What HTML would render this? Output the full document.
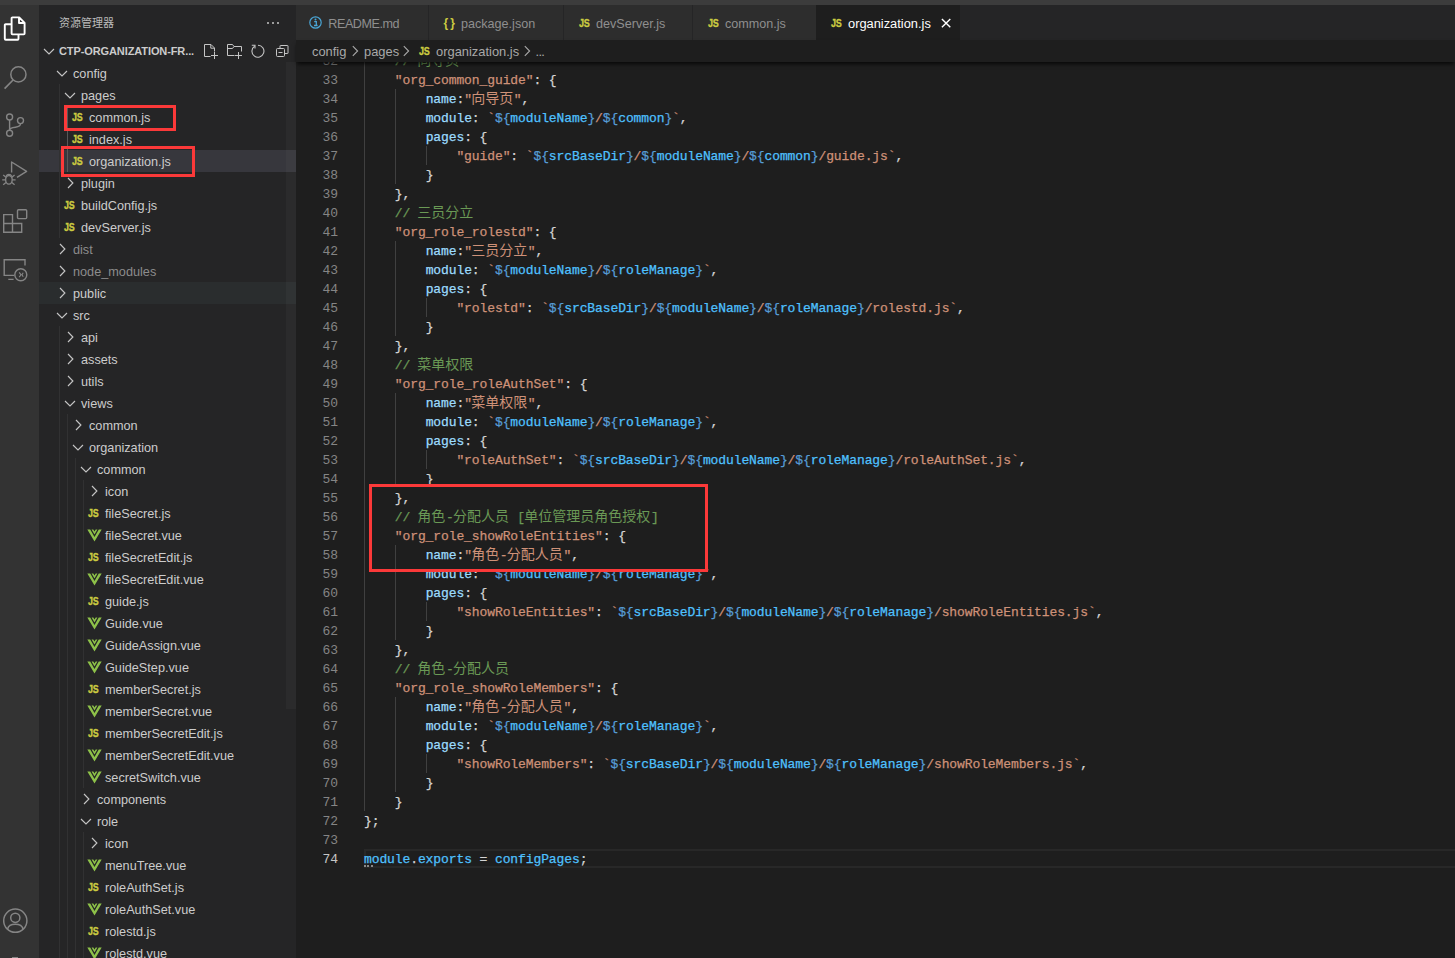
<!DOCTYPE html>
<html lang="zh-CN">
<head>
<meta charset="utf-8">
<title>organization.js - ctp-organization-front - Visual Studio Code</title>
<style>
*{box-sizing:border-box;margin:0;padding:0}
html,body{width:1455px;height:958px;overflow:hidden;background:#1e1e1e}
body{position:relative;font-family:"Liberation Sans","Noto Sans CJK SC",sans-serif;font-size:13px;color:#cccccc;-webkit-font-smoothing:antialiased}
#titlestrip{position:absolute;left:0;top:0;width:1455px;height:5px;background:#3c3c3c;z-index:20}
/* activity bar */
#act{position:absolute;left:0;top:5px;width:39px;height:953px;background:#333333;overflow:hidden}
#act svg{position:absolute}
/* sidebar */
#side{position:absolute;left:39px;top:5px;width:257px;height:953px;background:#252526;overflow:hidden}
#sidewrap{position:absolute;left:-39px;top:-5px;width:296px;height:958px}
#sidetitle{position:absolute;left:59px;top:15px;font-size:11px;line-height:16px;color:#bbbbbb;white-space:nowrap}
#sidedots{position:absolute;left:266.6px;top:21.7px;width:15px;height:3px}
#sidedots i{position:absolute;top:0;width:2.6px;height:2.6px;background:#c5c5c5;border-radius:1px}
#sechead{position:absolute;left:59px;top:43px;font-size:11px;line-height:16px;font-weight:bold;color:#cccccc;white-space:nowrap;letter-spacing:-0.1px}
.row{position:absolute;left:39px;width:257px;height:22px}
.row.sel{background:#37373d}
.row.hov{background:#2a2d2e}
.row>*{position:absolute}
.nm{top:1px;line-height:22px;font-size:12.7px;color:#cccccc;white-space:nowrap;margin-left:-39px}
.nm.dim{color:#8c8c8c}
.tw{top:3px;margin-left:-41px}
.js{top:0;line-height:22px;font-size:10.5px;font-weight:bold;color:#cbcb41;margin-left:-39px;letter-spacing:-0.3px;transform:scaleX(0.85);transform-origin:0 50%;-webkit-text-stroke:0.35px #cbcb41}
.vi{top:5px;margin-left:-39px}
.tg{position:absolute;width:1px;background:#313132}
.tg.on{background:#585858}
#sbar{position:absolute;left:286px;top:62px;width:10px;height:647px;background:rgba(121,121,121,0.085)}
.rbox{position:absolute;border:3px solid #fb3939}
/* tabs */
#tabs{position:absolute;left:296px;top:5px;width:1159px;height:35px;background:#252526}
.tab{position:absolute;top:0;height:35px;background:#2d2d2d;color:#8f8f8f;font-size:12.6px;line-height:36px;white-space:nowrap}
.tab.on{background:#1e1e1e;color:#ffffff;font-size:12.85px}
.tab>*{position:absolute}
.tab .tl{top:1px}
.tab .tjs{top:0;font-size:10.5px;font-weight:bold;color:#cbcb41;letter-spacing:-0.3px;transform:scaleX(0.86);transform-origin:0 50%;-webkit-text-stroke:0.3px #cbcb41}
/* breadcrumbs */
#crumbs{position:absolute;left:296px;top:40px;width:1159px;height:22px;background:#1e1e1e;z-index:10;box-shadow:0 3px 4px -1px rgba(0,0,0,0.75)}
#crumbs>*{position:absolute;top:0;line-height:23.5px;font-size:12.9px;color:#a9a9a9;white-space:nowrap}
#crumbs svg{top:3px}
#crumbs .tjs{font-size:10.5px;font-weight:bold;color:#cbcb41;letter-spacing:-0.3px;transform:scaleX(0.86);transform-origin:0 50%;-webkit-text-stroke:0.3px #cbcb41}
/* editor */
#ed{position:absolute;left:296px;top:62px;width:1159px;height:896px;background:#1e1e1e;overflow:hidden}
#edwrap{position:absolute;left:-296px;top:-62px;width:1455px;height:958px}
.ln{position:absolute;left:296px;width:42px;height:19px;line-height:21px;text-align:right;font-family:"Liberation Mono","Noto Sans CJK SC",monospace;font-size:13px;letter-spacing:-0.1px;color:#858585}
.ln.act{color:#c6c6c6}
.cl{position:absolute;left:364px;height:19px;line-height:21px;white-space:pre;font-family:"Liberation Mono","Noto Sans CJK SC",monospace;font-size:13px;letter-spacing:-0.1px;color:#d4d4d4;z-index:1;-webkit-text-stroke:0.25px}
.cl.hi,.ln.hi,.ig.hi{z-index:3}
.cj{font-size:14px;letter-spacing:0;line-height:19px;vertical-align:baseline;-webkit-text-stroke:0;position:relative;left:-0.7px}
.ig{position:absolute;width:1px;height:19px;background:#404040;z-index:1}
.c{color:#6a9955}.s{color:#ce9178}.v{color:#9cdcfe}.k{color:#569cd6}.p{color:#d4d4d4}.m{color:#4fc1ff}
#curline{position:absolute;left:364px;top:849px;width:1091px;height:19px;border:2px solid #282828;border-right:0}
#codebox{position:absolute;left:369px;top:484px;width:339px;height:88px;border:3px solid #fb3939;background:#1e1e1e;z-index:2}
#hint{position:absolute;left:364px;top:865px;width:10px;height:2px;z-index:4}
#hint i{position:absolute;top:0;width:2px;height:1.6px;background:#8a8a8a}
</style>
</head>
<body>
<div id="titlestrip"></div>

<div id="act">
  <!-- explorer (active) -->
  <svg style="left:3px;top:11px" width="24" height="26" viewBox="0 0 24 26"><path d="M9.4 1.4 H16.2 L21.6 6.8 V17.6 Q21.6 18.4 20.8 18.4 H9.4 Q8.6 18.4 8.6 17.6 V2.2 Q8.6 1.4 9.4 1.4 Z M16 1.6 V7 H21.4" fill="none" stroke="#ffffff" stroke-width="1.9" stroke-linejoin="round"/><path d="M8.6 8.3 H2.7 Q1.8 8.3 1.8 9.2 V22.8 Q1.8 23.7 2.7 23.7 H14.6 Q15.5 23.7 15.5 22.8 V18.6" fill="none" stroke="#ffffff" stroke-width="1.9" stroke-linejoin="round"/></svg>
  <!-- search -->
  <svg style="left:3px;top:60px" width="26" height="26" viewBox="0 0 26 26"><circle cx="15.4" cy="9.4" r="7.6" fill="none" stroke="#858585" stroke-width="1.5"/><path d="M10.1 15 L1.6 23.6" fill="none" stroke="#858585" stroke-width="1.6"/></svg>
  <!-- source control -->
  <svg style="left:4px;top:107px" width="22" height="26" viewBox="0 0 22 26"><circle cx="5.6" cy="5" r="3" fill="none" stroke="#858585" stroke-width="1.4"/><circle cx="5.6" cy="21.3" r="3" fill="none" stroke="#858585" stroke-width="1.4"/><circle cx="16.5" cy="8.6" r="3" fill="none" stroke="#858585" stroke-width="1.4"/><path d="M5.6 8 V18.3 M16.5 11.6 C16.5 14.6 14 15 11.5 15.2 C8.5 15.4 5.6 15.8 5.6 18.3" fill="none" stroke="#858585" stroke-width="1.4"/></svg>
  <!-- run and debug -->
  <svg style="left:1px;top:155px" width="28" height="28" viewBox="0 0 28 28"><path d="M10.6 12.4 V2 L25.6 11.4 L16 17.4" fill="none" stroke="#858585" stroke-width="1.4" stroke-linejoin="round"/><ellipse cx="7.9" cy="19.8" rx="3.3" ry="4.3" fill="none" stroke="#858585" stroke-width="1.4"/><path d="M5.2 16 C6.2 13.9 9.6 13.9 10.6 16 M1.2 19.8 H4.6 M11.2 19.8 H14.6 M2.2 15 L5 17.2 M13.6 15 L10.8 17.2 M2.2 24.8 L5 22.6 M13.6 24.8 L10.8 22.6" fill="none" stroke="#858585" stroke-width="1.3"/></svg>
  <!-- extensions -->
  <svg style="left:2px;top:202px" width="27" height="27" viewBox="0 0 27 27"><path d="M1.7 7.6 H10.5 V16.5 H19.7 V25.3 H1.7 Z M1.7 16.5 H10.5 V25.3" fill="none" stroke="#858585" stroke-width="1.4"/><rect x="15.5" y="2.8" width="9.2" height="8.8" rx="1" fill="none" stroke="#858585" stroke-width="1.4"/></svg>
  <!-- remote explorer -->
  <svg style="left:2px;top:251px" width="28" height="28" viewBox="0 0 28 28"><path d="M23 9.6 V3.7 H2.2 V19.4 H12.2 M6.3 23.4 H11.6" fill="none" stroke="#858585" stroke-width="1.4"/><circle cx="18.8" cy="18.8" r="6" fill="none" stroke="#858585" stroke-width="1.4"/><path d="M17.2 16.4 L19 18.8 L17.2 21.2 M21.2 16.8 L20 18.8 L21.2 20.8" fill="none" stroke="#858585" stroke-width="1.1"/></svg>
  <!-- account -->
  <svg style="left:1.8px;top:902.4px" width="27" height="27" viewBox="0 0 27 27"><circle cx="13.3" cy="13.7" r="11.6" fill="none" stroke="#858585" stroke-width="1.5"/><circle cx="13.3" cy="10.8" r="4.6" fill="none" stroke="#858585" stroke-width="1.5"/><path d="M5.6 22 C7 15.6 19.6 15.6 21 22" fill="none" stroke="#858585" stroke-width="1.5"/></svg>
  <!-- gear top sliver -->
  <svg style="left:11px;top:951px" width="8" height="3" viewBox="0 0 8 3"><rect x="1" y="1" width="6" height="2" fill="#858585"/></svg>
</div>

<div id="side"><div id="sidewrap">
  <div id="sidetitle">资源管理器</div>
  <div id="sidedots"><i style="left:0"></i><i style="left:5px"></i><i style="left:10px"></i></div>
  <svg style="position:absolute;left:41px;top:43px" width="16" height="16" viewBox="0 0 16 16"><path d="M3 6 L8 10.9 L13 6" fill="none" stroke="#c5c5c5" stroke-width="1.15"/></svg>
  <div id="sechead">CTP-ORGANIZATION-FR...</div>
  <!-- new file -->
  <svg style="position:absolute;left:203px;top:43px" width="16" height="17" viewBox="0 0 16 17"><path d="M7.5 13.5 H1.5 V1.5 H8 L11.5 5 V8.5 M7.8 1.7 V5.2 H11.3" fill="none" stroke="#c5c5c5" stroke-width="1"/><path d="M11.5 9 V16 M8 12.5 H15" fill="none" stroke="#c5c5c5" stroke-width="1"/></svg>
  <!-- new folder -->
  <svg style="position:absolute;left:226px;top:43px" width="17" height="17" viewBox="0 0 17 17"><path d="M8.5 12.5 H1.5 V1.5 H6.5 L8 3.5 H15.5 V8.5 M1.5 5.5 H6.5 L8 3.5" fill="none" stroke="#c5c5c5" stroke-width="1"/><path d="M12.5 9 V16 M9 12.5 H16" fill="none" stroke="#c5c5c5" stroke-width="1"/></svg>
  <!-- refresh -->
  <svg style="position:absolute;left:250px;top:43px" width="16" height="16" viewBox="0 0 16 16"><path d="M4.6 3.2 A6 6 0 1 0 8 2.2" fill="none" stroke="#c5c5c5" stroke-width="1.1"/><path d="M1.8 2.2 H5 V5.6" fill="none" stroke="#c5c5c5" stroke-width="1.1"/></svg>
  <!-- collapse all -->
  <svg style="position:absolute;left:275px;top:43px" width="15" height="15" viewBox="0 0 15 15"><path d="M5 5.5 V3 Q5 2.5 5.5 2.5 H12.5 Q13 2.5 13 3 V10 Q13 10.5 12.5 10.5 H9.5" fill="none" stroke="#c5c5c5" stroke-width="1"/><rect x="1.5" y="5.5" width="8" height="8" rx="1" fill="none" stroke="#c5c5c5" stroke-width="1"/><path d="M3.5 9.5 H7.5" stroke="#c5c5c5" stroke-width="1"/></svg>
<div class="row" style="top:62px"><svg class="tw" style="left:56px" width="16" height="16" viewBox="0 0 16 16"><path d="M3 6 L8 10.9 L13 6" fill="none" stroke="#c5c5c5" stroke-width="1.15"/></svg><span class="nm" style="left:73px">config</span></div>
<div class="row" style="top:84px"><svg class="tw" style="left:64px" width="16" height="16" viewBox="0 0 16 16"><path d="M3 6 L8 10.9 L13 6" fill="none" stroke="#c5c5c5" stroke-width="1.15"/></svg><span class="nm" style="left:81px">pages</span></div>
<div class="row" style="top:106px"><b class="js" style="left:72.0px">JS</b><span class="nm" style="left:89px">common.js</span></div>
<div class="row" style="top:128px"><b class="js" style="left:72.0px">JS</b><span class="nm" style="left:89px">index.js</span></div>
<div class="row sel" style="top:150px"><b class="js" style="left:72.0px">JS</b><span class="nm" style="left:89px">organization.js</span></div>
<div class="row" style="top:172px"><svg class="tw" style="left:64px" width="16" height="16" viewBox="0 0 16 16"><path d="M6 3 L10.9 8 L6 13" fill="none" stroke="#c5c5c5" stroke-width="1.15"/></svg><span class="nm" style="left:81px">plugin</span></div>
<div class="row" style="top:194px"><b class="js" style="left:64.0px">JS</b><span class="nm" style="left:81px">buildConfig.js</span></div>
<div class="row" style="top:216px"><b class="js" style="left:64.0px">JS</b><span class="nm" style="left:81px">devServer.js</span></div>
<div class="row" style="top:238px"><svg class="tw" style="left:56px" width="16" height="16" viewBox="0 0 16 16"><path d="M6 3 L10.9 8 L6 13" fill="none" stroke="#c5c5c5" stroke-width="1.15"/></svg><span class="nm dim" style="left:73px">dist</span></div>
<div class="row" style="top:260px"><svg class="tw" style="left:56px" width="16" height="16" viewBox="0 0 16 16"><path d="M6 3 L10.9 8 L6 13" fill="none" stroke="#c5c5c5" stroke-width="1.15"/></svg><span class="nm dim" style="left:73px">node_modules</span></div>
<div class="row hov" style="top:282px"><svg class="tw" style="left:56px" width="16" height="16" viewBox="0 0 16 16"><path d="M6 3 L10.9 8 L6 13" fill="none" stroke="#c5c5c5" stroke-width="1.15"/></svg><span class="nm" style="left:73px">public</span></div>
<div class="row" style="top:304px"><svg class="tw" style="left:56px" width="16" height="16" viewBox="0 0 16 16"><path d="M3 6 L8 10.9 L13 6" fill="none" stroke="#c5c5c5" stroke-width="1.15"/></svg><span class="nm" style="left:73px">src</span></div>
<div class="row" style="top:326px"><svg class="tw" style="left:64px" width="16" height="16" viewBox="0 0 16 16"><path d="M6 3 L10.9 8 L6 13" fill="none" stroke="#c5c5c5" stroke-width="1.15"/></svg><span class="nm" style="left:81px">api</span></div>
<div class="row" style="top:348px"><svg class="tw" style="left:64px" width="16" height="16" viewBox="0 0 16 16"><path d="M6 3 L10.9 8 L6 13" fill="none" stroke="#c5c5c5" stroke-width="1.15"/></svg><span class="nm" style="left:81px">assets</span></div>
<div class="row" style="top:370px"><svg class="tw" style="left:64px" width="16" height="16" viewBox="0 0 16 16"><path d="M6 3 L10.9 8 L6 13" fill="none" stroke="#c5c5c5" stroke-width="1.15"/></svg><span class="nm" style="left:81px">utils</span></div>
<div class="row" style="top:392px"><svg class="tw" style="left:64px" width="16" height="16" viewBox="0 0 16 16"><path d="M3 6 L8 10.9 L13 6" fill="none" stroke="#c5c5c5" stroke-width="1.15"/></svg><span class="nm" style="left:81px">views</span></div>
<div class="row" style="top:414px"><svg class="tw" style="left:72px" width="16" height="16" viewBox="0 0 16 16"><path d="M6 3 L10.9 8 L6 13" fill="none" stroke="#c5c5c5" stroke-width="1.15"/></svg><span class="nm" style="left:89px">common</span></div>
<div class="row" style="top:436px"><svg class="tw" style="left:72px" width="16" height="16" viewBox="0 0 16 16"><path d="M3 6 L8 10.9 L13 6" fill="none" stroke="#c5c5c5" stroke-width="1.15"/></svg><span class="nm" style="left:89px">organization</span></div>
<div class="row" style="top:458px"><svg class="tw" style="left:80px" width="16" height="16" viewBox="0 0 16 16"><path d="M3 6 L8 10.9 L13 6" fill="none" stroke="#c5c5c5" stroke-width="1.15"/></svg><span class="nm" style="left:97px">common</span></div>
<div class="row" style="top:480px"><svg class="tw" style="left:88px" width="16" height="16" viewBox="0 0 16 16"><path d="M6 3 L10.9 8 L6 13" fill="none" stroke="#c5c5c5" stroke-width="1.15"/></svg><span class="nm" style="left:105px">icon</span></div>
<div class="row" style="top:502px"><b class="js" style="left:88.0px">JS</b><span class="nm" style="left:105px">fileSecret.js</span></div>
<div class="row" style="top:524px"><svg class="vi" style="left:87.0px" width="15" height="13" viewBox="0 0 15 13"><path d="M0.3 0.4 H3.2 L7.5 8 L11.8 0.4 H14.7 L7.5 12.6 Z" fill="#8dc149"/><path d="M4.6 0.4 H6.3 L7.5 2.6 L8.7 0.4 H10.4 L7.5 5.6 Z" fill="#8dc149"/></svg><span class="nm" style="left:105px">fileSecret.vue</span></div>
<div class="row" style="top:546px"><b class="js" style="left:88.0px">JS</b><span class="nm" style="left:105px">fileSecretEdit.js</span></div>
<div class="row" style="top:568px"><svg class="vi" style="left:87.0px" width="15" height="13" viewBox="0 0 15 13"><path d="M0.3 0.4 H3.2 L7.5 8 L11.8 0.4 H14.7 L7.5 12.6 Z" fill="#8dc149"/><path d="M4.6 0.4 H6.3 L7.5 2.6 L8.7 0.4 H10.4 L7.5 5.6 Z" fill="#8dc149"/></svg><span class="nm" style="left:105px">fileSecretEdit.vue</span></div>
<div class="row" style="top:590px"><b class="js" style="left:88.0px">JS</b><span class="nm" style="left:105px">guide.js</span></div>
<div class="row" style="top:612px"><svg class="vi" style="left:87.0px" width="15" height="13" viewBox="0 0 15 13"><path d="M0.3 0.4 H3.2 L7.5 8 L11.8 0.4 H14.7 L7.5 12.6 Z" fill="#8dc149"/><path d="M4.6 0.4 H6.3 L7.5 2.6 L8.7 0.4 H10.4 L7.5 5.6 Z" fill="#8dc149"/></svg><span class="nm" style="left:105px">Guide.vue</span></div>
<div class="row" style="top:634px"><svg class="vi" style="left:87.0px" width="15" height="13" viewBox="0 0 15 13"><path d="M0.3 0.4 H3.2 L7.5 8 L11.8 0.4 H14.7 L7.5 12.6 Z" fill="#8dc149"/><path d="M4.6 0.4 H6.3 L7.5 2.6 L8.7 0.4 H10.4 L7.5 5.6 Z" fill="#8dc149"/></svg><span class="nm" style="left:105px">GuideAssign.vue</span></div>
<div class="row" style="top:656px"><svg class="vi" style="left:87.0px" width="15" height="13" viewBox="0 0 15 13"><path d="M0.3 0.4 H3.2 L7.5 8 L11.8 0.4 H14.7 L7.5 12.6 Z" fill="#8dc149"/><path d="M4.6 0.4 H6.3 L7.5 2.6 L8.7 0.4 H10.4 L7.5 5.6 Z" fill="#8dc149"/></svg><span class="nm" style="left:105px">GuideStep.vue</span></div>
<div class="row" style="top:678px"><b class="js" style="left:88.0px">JS</b><span class="nm" style="left:105px">memberSecret.js</span></div>
<div class="row" style="top:700px"><svg class="vi" style="left:87.0px" width="15" height="13" viewBox="0 0 15 13"><path d="M0.3 0.4 H3.2 L7.5 8 L11.8 0.4 H14.7 L7.5 12.6 Z" fill="#8dc149"/><path d="M4.6 0.4 H6.3 L7.5 2.6 L8.7 0.4 H10.4 L7.5 5.6 Z" fill="#8dc149"/></svg><span class="nm" style="left:105px">memberSecret.vue</span></div>
<div class="row" style="top:722px"><b class="js" style="left:88.0px">JS</b><span class="nm" style="left:105px">memberSecretEdit.js</span></div>
<div class="row" style="top:744px"><svg class="vi" style="left:87.0px" width="15" height="13" viewBox="0 0 15 13"><path d="M0.3 0.4 H3.2 L7.5 8 L11.8 0.4 H14.7 L7.5 12.6 Z" fill="#8dc149"/><path d="M4.6 0.4 H6.3 L7.5 2.6 L8.7 0.4 H10.4 L7.5 5.6 Z" fill="#8dc149"/></svg><span class="nm" style="left:105px">memberSecretEdit.vue</span></div>
<div class="row" style="top:766px"><svg class="vi" style="left:87.0px" width="15" height="13" viewBox="0 0 15 13"><path d="M0.3 0.4 H3.2 L7.5 8 L11.8 0.4 H14.7 L7.5 12.6 Z" fill="#8dc149"/><path d="M4.6 0.4 H6.3 L7.5 2.6 L8.7 0.4 H10.4 L7.5 5.6 Z" fill="#8dc149"/></svg><span class="nm" style="left:105px">secretSwitch.vue</span></div>
<div class="row" style="top:788px"><svg class="tw" style="left:80px" width="16" height="16" viewBox="0 0 16 16"><path d="M6 3 L10.9 8 L6 13" fill="none" stroke="#c5c5c5" stroke-width="1.15"/></svg><span class="nm" style="left:97px">components</span></div>
<div class="row" style="top:810px"><svg class="tw" style="left:80px" width="16" height="16" viewBox="0 0 16 16"><path d="M3 6 L8 10.9 L13 6" fill="none" stroke="#c5c5c5" stroke-width="1.15"/></svg><span class="nm" style="left:97px">role</span></div>
<div class="row" style="top:832px"><svg class="tw" style="left:88px" width="16" height="16" viewBox="0 0 16 16"><path d="M6 3 L10.9 8 L6 13" fill="none" stroke="#c5c5c5" stroke-width="1.15"/></svg><span class="nm" style="left:105px">icon</span></div>
<div class="row" style="top:854px"><svg class="vi" style="left:87.0px" width="15" height="13" viewBox="0 0 15 13"><path d="M0.3 0.4 H3.2 L7.5 8 L11.8 0.4 H14.7 L7.5 12.6 Z" fill="#8dc149"/><path d="M4.6 0.4 H6.3 L7.5 2.6 L8.7 0.4 H10.4 L7.5 5.6 Z" fill="#8dc149"/></svg><span class="nm" style="left:105px">menuTree.vue</span></div>
<div class="row" style="top:876px"><b class="js" style="left:88.0px">JS</b><span class="nm" style="left:105px">roleAuthSet.js</span></div>
<div class="row" style="top:898px"><svg class="vi" style="left:87.0px" width="15" height="13" viewBox="0 0 15 13"><path d="M0.3 0.4 H3.2 L7.5 8 L11.8 0.4 H14.7 L7.5 12.6 Z" fill="#8dc149"/><path d="M4.6 0.4 H6.3 L7.5 2.6 L8.7 0.4 H10.4 L7.5 5.6 Z" fill="#8dc149"/></svg><span class="nm" style="left:105px">roleAuthSet.vue</span></div>
<div class="row" style="top:920px"><b class="js" style="left:88.0px">JS</b><span class="nm" style="left:105px">rolestd.js</span></div>
<div class="row" style="top:942px"><svg class="vi" style="left:87.0px" width="15" height="13" viewBox="0 0 15 13"><path d="M0.3 0.4 H3.2 L7.5 8 L11.8 0.4 H14.7 L7.5 12.6 Z" fill="#8dc149"/><path d="M4.6 0.4 H6.3 L7.5 2.6 L8.7 0.4 H10.4 L7.5 5.6 Z" fill="#8dc149"/></svg><span class="nm" style="left:105px">rolestd.vue</span></div>
<i class="tg" style="left:59px;top:84px;height:154px"></i>
<i class="tg on" style="left:67px;top:106px;height:66px"></i>
<i class="tg" style="left:59px;top:326px;height:638px"></i>
<i class="tg" style="left:67px;top:414px;height:550px"></i>
<i class="tg" style="left:75px;top:458px;height:506px"></i>
<i class="tg" style="left:83px;top:480px;height:308px"></i>
<i class="tg" style="left:83px;top:832px;height:132px"></i>
  <div id="sbar"></div>
  <div class="rbox" style="left:64px;top:105px;width:112px;height:26px"></div>
  <div class="rbox" style="left:61px;top:146px;width:134px;height:31px"></div>
</div></div>

<div id="tabs">
  <div class="tab" style="left:0;width:132px">
    <svg style="left:13px;top:10.7px" width="13" height="13" viewBox="0 0 13 13"><circle cx="6.5" cy="6.5" r="5.7" fill="none" stroke="#4aa6d6" stroke-width="1.2"/><path d="M5.2 5.6 H7.3 V9.4 M5 9.5 H8.6" fill="none" stroke="#4aa6d6" stroke-width="1.3"/><circle cx="6.5" cy="3.5" r="1" fill="#4aa6d6"/></svg>
    <span class="tl" style="left:32.3px;letter-spacing:-0.45px">README.md</span>
  </div>
  <div class="tab" style="left:133px;width:134px">
    <span class="tjs" style="left:14.5px;font-size:12px;letter-spacing:2.2px;transform:none;-webkit-text-stroke:0">{}</span>
    <span class="tl" style="left:32px">package.json</span>
  </div>
  <div class="tab" style="left:268px;width:128px">
    <b class="tjs" style="left:15px">JS</b>
    <span class="tl" style="left:32px">devServer.js</span>
  </div>
  <div class="tab" style="left:397px;width:122.5px">
    <b class="tjs" style="left:15px">JS</b>
    <span class="tl" style="left:32px">common.js</span>
  </div>
  <div class="tab on" style="left:520px;width:144px">
    <b class="tjs" style="left:15px">JS</b>
    <span class="tl" style="left:32px">organization.js</span>
    <svg style="left:122px;top:10px" width="16" height="16" viewBox="0 0 16 16"><path d="M3.9 3.9 L12.3 12.3 M12.3 3.9 L3.9 12.3" stroke="#ffffff" stroke-width="1.4" fill="none"/></svg>
  </div>
</div>

<div id="crumbs">
  <span style="left:16px">config</span>
  <svg style="left:51px" width="16" height="16" viewBox="0 0 16 16"><path d="M5.8 3.2 L10.6 8 L5.8 12.8" fill="none" stroke="#a9a9a9" stroke-width="1.1"/></svg>
  <span style="left:68px">pages</span>
  <svg style="left:101.5px" width="16" height="16" viewBox="0 0 16 16"><path d="M5.8 3.2 L10.6 8 L5.8 12.8" fill="none" stroke="#a9a9a9" stroke-width="1.1"/></svg>
  <b class="tjs" style="left:123px">JS</b>
  <span style="left:140px">organization.js</span>
  <svg style="left:223px" width="16" height="16" viewBox="0 0 16 16"><path d="M5.8 3.2 L10.6 8 L5.8 12.8" fill="none" stroke="#a9a9a9" stroke-width="1.1"/></svg>
  <span style="left:239.5px;letter-spacing:-0.7px">...</span>
</div>

<div id="ed"><div id="edwrap">
  <div id="curline"></div>
<div class="ln" style="top:51px">32</div>
<i class="ig" style="left:364px;top:51px"></i>
<div class="cl" style="top:51px">    <span class="c">// <span class="cj">向导页</span></span></div>
<div class="ln" style="top:70px">33</div>
<i class="ig" style="left:364px;top:70px"></i>
<div class="cl" style="top:70px">    <span class="s">"org_common_guide"</span><span class="p">: {</span></div>
<div class="ln" style="top:89px">34</div>
<i class="ig" style="left:364px;top:89px"></i>
<i class="ig" style="left:395px;top:89px"></i>
<div class="cl" style="top:89px">        <span class="v">name</span><span class="p">:</span><span class="s">"<span class="cj">向导页</span>"</span><span class="p">,</span></div>
<div class="ln" style="top:108px">35</div>
<i class="ig" style="left:364px;top:108px"></i>
<i class="ig" style="left:395px;top:108px"></i>
<div class="cl" style="top:108px">        <span class="v">module</span><span class="p">: </span><span class="s">`</span><span class="k">${</span><span class="m">moduleName</span><span class="k">}</span><span class="s">/</span><span class="k">${</span><span class="m">common</span><span class="k">}</span><span class="s">`</span><span class="p">,</span></div>
<div class="ln" style="top:127px">36</div>
<i class="ig" style="left:364px;top:127px"></i>
<i class="ig" style="left:395px;top:127px"></i>
<div class="cl" style="top:127px">        <span class="v">pages</span><span class="p">: {</span></div>
<div class="ln" style="top:146px">37</div>
<i class="ig" style="left:364px;top:146px"></i>
<i class="ig" style="left:395px;top:146px"></i>
<i class="ig" style="left:426px;top:146px"></i>
<div class="cl" style="top:146px">            <span class="s">"guide"</span><span class="p">: </span><span class="s">`</span><span class="k">${</span><span class="m">srcBaseDir</span><span class="k">}</span><span class="s">/</span><span class="k">${</span><span class="m">moduleName</span><span class="k">}</span><span class="s">/</span><span class="k">${</span><span class="m">common</span><span class="k">}</span><span class="s">/guide.js`</span><span class="p">,</span></div>
<div class="ln" style="top:165px">38</div>
<i class="ig" style="left:364px;top:165px"></i>
<i class="ig" style="left:395px;top:165px"></i>
<div class="cl" style="top:165px">        <span class="p">}</span></div>
<div class="ln" style="top:184px">39</div>
<i class="ig" style="left:364px;top:184px"></i>
<div class="cl" style="top:184px">    <span class="p">},</span></div>
<div class="ln" style="top:203px">40</div>
<i class="ig" style="left:364px;top:203px"></i>
<div class="cl" style="top:203px">    <span class="c">// <span class="cj">三员分立</span></span></div>
<div class="ln" style="top:222px">41</div>
<i class="ig" style="left:364px;top:222px"></i>
<div class="cl" style="top:222px">    <span class="s">"org_role_rolestd"</span><span class="p">: {</span></div>
<div class="ln" style="top:241px">42</div>
<i class="ig" style="left:364px;top:241px"></i>
<i class="ig" style="left:395px;top:241px"></i>
<div class="cl" style="top:241px">        <span class="v">name</span><span class="p">:</span><span class="s">"<span class="cj">三员分立</span>"</span><span class="p">,</span></div>
<div class="ln" style="top:260px">43</div>
<i class="ig" style="left:364px;top:260px"></i>
<i class="ig" style="left:395px;top:260px"></i>
<div class="cl" style="top:260px">        <span class="v">module</span><span class="p">: </span><span class="s">`</span><span class="k">${</span><span class="m">moduleName</span><span class="k">}</span><span class="s">/</span><span class="k">${</span><span class="m">roleManage</span><span class="k">}</span><span class="s">`</span><span class="p">,</span></div>
<div class="ln" style="top:279px">44</div>
<i class="ig" style="left:364px;top:279px"></i>
<i class="ig" style="left:395px;top:279px"></i>
<div class="cl" style="top:279px">        <span class="v">pages</span><span class="p">: {</span></div>
<div class="ln" style="top:298px">45</div>
<i class="ig" style="left:364px;top:298px"></i>
<i class="ig" style="left:395px;top:298px"></i>
<i class="ig" style="left:426px;top:298px"></i>
<div class="cl" style="top:298px">            <span class="s">"rolestd"</span><span class="p">: </span><span class="s">`</span><span class="k">${</span><span class="m">srcBaseDir</span><span class="k">}</span><span class="s">/</span><span class="k">${</span><span class="m">moduleName</span><span class="k">}</span><span class="s">/</span><span class="k">${</span><span class="m">roleManage</span><span class="k">}</span><span class="s">/rolestd.js`</span><span class="p">,</span></div>
<div class="ln" style="top:317px">46</div>
<i class="ig" style="left:364px;top:317px"></i>
<i class="ig" style="left:395px;top:317px"></i>
<div class="cl" style="top:317px">        <span class="p">}</span></div>
<div class="ln" style="top:336px">47</div>
<i class="ig" style="left:364px;top:336px"></i>
<div class="cl" style="top:336px">    <span class="p">},</span></div>
<div class="ln" style="top:355px">48</div>
<i class="ig" style="left:364px;top:355px"></i>
<div class="cl" style="top:355px">    <span class="c">// <span class="cj">菜单权限</span></span></div>
<div class="ln" style="top:374px">49</div>
<i class="ig" style="left:364px;top:374px"></i>
<div class="cl" style="top:374px">    <span class="s">"org_role_roleAuthSet"</span><span class="p">: {</span></div>
<div class="ln" style="top:393px">50</div>
<i class="ig" style="left:364px;top:393px"></i>
<i class="ig" style="left:395px;top:393px"></i>
<div class="cl" style="top:393px">        <span class="v">name</span><span class="p">:</span><span class="s">"<span class="cj">菜单权限</span>"</span><span class="p">,</span></div>
<div class="ln" style="top:412px">51</div>
<i class="ig" style="left:364px;top:412px"></i>
<i class="ig" style="left:395px;top:412px"></i>
<div class="cl" style="top:412px">        <span class="v">module</span><span class="p">: </span><span class="s">`</span><span class="k">${</span><span class="m">moduleName</span><span class="k">}</span><span class="s">/</span><span class="k">${</span><span class="m">roleManage</span><span class="k">}</span><span class="s">`</span><span class="p">,</span></div>
<div class="ln" style="top:431px">52</div>
<i class="ig" style="left:364px;top:431px"></i>
<i class="ig" style="left:395px;top:431px"></i>
<div class="cl" style="top:431px">        <span class="v">pages</span><span class="p">: {</span></div>
<div class="ln" style="top:450px">53</div>
<i class="ig" style="left:364px;top:450px"></i>
<i class="ig" style="left:395px;top:450px"></i>
<i class="ig" style="left:426px;top:450px"></i>
<div class="cl" style="top:450px">            <span class="s">"roleAuthSet"</span><span class="p">: </span><span class="s">`</span><span class="k">${</span><span class="m">srcBaseDir</span><span class="k">}</span><span class="s">/</span><span class="k">${</span><span class="m">moduleName</span><span class="k">}</span><span class="s">/</span><span class="k">${</span><span class="m">roleManage</span><span class="k">}</span><span class="s">/roleAuthSet.js`</span><span class="p">,</span></div>
<div class="ln" style="top:469px">54</div>
<i class="ig" style="left:364px;top:469px"></i>
<i class="ig" style="left:395px;top:469px"></i>
<div class="cl" style="top:469px">        <span class="p">}</span></div>
<div class="ln hi" style="top:488px">55</div>
<i class="ig hi" style="left:364px;top:488px"></i>
<div class="cl hi" style="top:488px">    <span class="p">},</span></div>
<div class="ln hi" style="top:507px">56</div>
<i class="ig hi" style="left:364px;top:507px"></i>
<div class="cl hi" style="top:507px">    <span class="c">// <span class="cj">角色</span>-<span class="cj">分配人员</span> [<span class="cj">单位管理员角色授权</span>]</span></div>
<div class="ln hi" style="top:526px">57</div>
<i class="ig hi" style="left:364px;top:526px"></i>
<div class="cl hi" style="top:526px">    <span class="s">"org_role_showRoleEntities"</span><span class="p">: {</span></div>
<div class="ln hi" style="top:545px">58</div>
<i class="ig hi" style="left:364px;top:545px"></i>
<i class="ig hi" style="left:395px;top:545px"></i>
<div class="cl hi" style="top:545px">        <span class="v">name</span><span class="p">:</span><span class="s">"<span class="cj">角色</span>-<span class="cj">分配人员</span>"</span><span class="p">,</span></div>
<div class="ln" style="top:564px">59</div>
<i class="ig" style="left:364px;top:564px"></i>
<i class="ig" style="left:395px;top:564px"></i>
<div class="cl" style="top:564px">        <span class="v">module</span><span class="p">: </span><span class="s">`</span><span class="k">${</span><span class="m">moduleName</span><span class="k">}</span><span class="s">/</span><span class="k">${</span><span class="m">roleManage</span><span class="k">}</span><span class="s">`</span><span class="p">,</span></div>
<div class="ln" style="top:583px">60</div>
<i class="ig" style="left:364px;top:583px"></i>
<i class="ig" style="left:395px;top:583px"></i>
<div class="cl" style="top:583px">        <span class="v">pages</span><span class="p">: {</span></div>
<div class="ln" style="top:602px">61</div>
<i class="ig" style="left:364px;top:602px"></i>
<i class="ig" style="left:395px;top:602px"></i>
<i class="ig" style="left:426px;top:602px"></i>
<div class="cl" style="top:602px">            <span class="s">"showRoleEntities"</span><span class="p">: </span><span class="s">`</span><span class="k">${</span><span class="m">srcBaseDir</span><span class="k">}</span><span class="s">/</span><span class="k">${</span><span class="m">moduleName</span><span class="k">}</span><span class="s">/</span><span class="k">${</span><span class="m">roleManage</span><span class="k">}</span><span class="s">/showRoleEntities.js`</span><span class="p">,</span></div>
<div class="ln" style="top:621px">62</div>
<i class="ig" style="left:364px;top:621px"></i>
<i class="ig" style="left:395px;top:621px"></i>
<div class="cl" style="top:621px">        <span class="p">}</span></div>
<div class="ln" style="top:640px">63</div>
<i class="ig" style="left:364px;top:640px"></i>
<div class="cl" style="top:640px">    <span class="p">},</span></div>
<div class="ln" style="top:659px">64</div>
<i class="ig" style="left:364px;top:659px"></i>
<div class="cl" style="top:659px">    <span class="c">// <span class="cj">角色</span>-<span class="cj">分配人员</span></span></div>
<div class="ln" style="top:678px">65</div>
<i class="ig" style="left:364px;top:678px"></i>
<div class="cl" style="top:678px">    <span class="s">"org_role_showRoleMembers"</span><span class="p">: {</span></div>
<div class="ln" style="top:697px">66</div>
<i class="ig" style="left:364px;top:697px"></i>
<i class="ig" style="left:395px;top:697px"></i>
<div class="cl" style="top:697px">        <span class="v">name</span><span class="p">:</span><span class="s">"<span class="cj">角色</span>-<span class="cj">分配人员</span>"</span><span class="p">,</span></div>
<div class="ln" style="top:716px">67</div>
<i class="ig" style="left:364px;top:716px"></i>
<i class="ig" style="left:395px;top:716px"></i>
<div class="cl" style="top:716px">        <span class="v">module</span><span class="p">: </span><span class="s">`</span><span class="k">${</span><span class="m">moduleName</span><span class="k">}</span><span class="s">/</span><span class="k">${</span><span class="m">roleManage</span><span class="k">}</span><span class="s">`</span><span class="p">,</span></div>
<div class="ln" style="top:735px">68</div>
<i class="ig" style="left:364px;top:735px"></i>
<i class="ig" style="left:395px;top:735px"></i>
<div class="cl" style="top:735px">        <span class="v">pages</span><span class="p">: {</span></div>
<div class="ln" style="top:754px">69</div>
<i class="ig" style="left:364px;top:754px"></i>
<i class="ig" style="left:395px;top:754px"></i>
<i class="ig" style="left:426px;top:754px"></i>
<div class="cl" style="top:754px">            <span class="s">"showRoleMembers"</span><span class="p">: </span><span class="s">`</span><span class="k">${</span><span class="m">srcBaseDir</span><span class="k">}</span><span class="s">/</span><span class="k">${</span><span class="m">moduleName</span><span class="k">}</span><span class="s">/</span><span class="k">${</span><span class="m">roleManage</span><span class="k">}</span><span class="s">/showRoleMembers.js`</span><span class="p">,</span></div>
<div class="ln" style="top:773px">70</div>
<i class="ig" style="left:364px;top:773px"></i>
<i class="ig" style="left:395px;top:773px"></i>
<div class="cl" style="top:773px">        <span class="p">}</span></div>
<div class="ln" style="top:792px">71</div>
<i class="ig" style="left:364px;top:792px"></i>
<div class="cl" style="top:792px">    <span class="p">}</span></div>
<div class="ln" style="top:811px">72</div>
<div class="cl" style="top:811px"><span class="p">};</span></div>
<div class="ln" style="top:830px">73</div>
<div class="ln act" style="top:849px">74</div>
<div class="cl" style="top:849px"><span class="m">module</span><span class="p">.</span><span class="m">exports</span><span class="p"> = </span><span class="m">configPages</span><span class="p">;</span></div>
  <div id="codebox"></div>
  <div id="hint"><i style="left:0"></i><i style="left:3.3px"></i><i style="left:6.6px"></i></div>
  <i class="ig hi" style="left:395px;top:564px;height:5px"></i>
</div></div>

</body>
</html>
